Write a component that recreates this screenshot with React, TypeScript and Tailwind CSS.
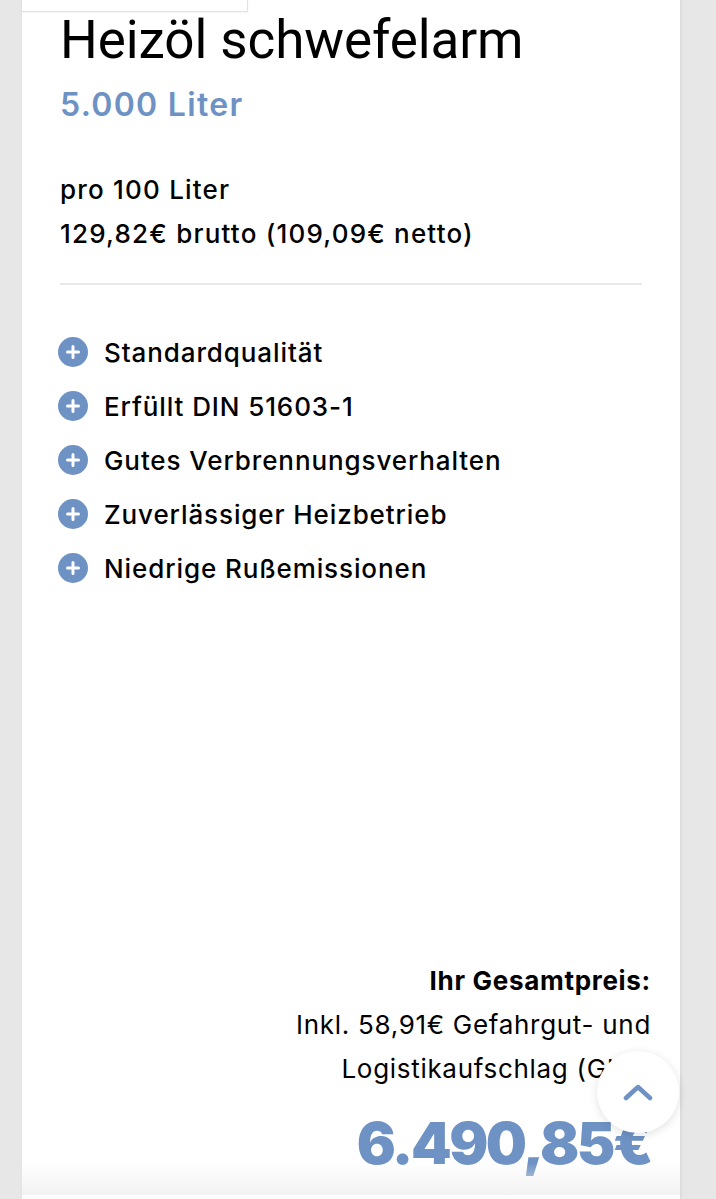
import React from "react";

const features = [
  "Standardqualität",
  "Erfüllt DIN 51603-1",
  "Gutes Verbrennungsverhalten",
  "Zuverlässiger Heizbetrieb",
  "Niedrige Rußemissionen",
];

function PlusIcon() {
  return (
    <span className="w-[30px] h-[30px] shrink-0 -ml-[2px] rounded-full bg-[#6e92c4] flex items-center justify-center">
      <svg width="14" height="14" viewBox="0 0 14 14">
        <path d="M7 1.5v11M1.5 7h11" stroke="white" strokeWidth="3" strokeLinecap="round" />
      </svg>
    </span>
  );
}

export default function App() {
  return (
    <div
      className="relative w-[716px] h-[1199px] overflow-hidden bg-[#e7e7e7]"
      style={{ fontFamily: "Inter, 'Noto Sans', sans-serif" }}
    >
      <div className="ml-[22px] w-[658px] h-full bg-white shadow-[1px_0_3px_rgba(0,0,0,0.08)] flex flex-col">
        {/* tab */}
        <div className="w-[226px] h-[12px] bg-white border-r border-b border-[#e2e2e2] shadow-[0_1px_2px_rgba(0,0,0,0.05)]" />

        <div className="px-[38px] pt-[2px]">
          <h1
            className="text-[53px] leading-[52px] font-normal text-black tracking-[-0.1px]"
            style={{ fontFamily: "Roboto, sans-serif" }}
          >
            Heizöl schwefelarm
          </h1>
          <p className="mt-[21px] text-[32px] leading-[36px] font-semibold text-[#6e92c4] tracking-[1.3px]">
            5.000 Liter
          </p>

          <div className="mt-[45px] text-[26px] leading-[44px] font-medium text-black tracking-[1.2px]">
            <p>pro 100 Liter</p>
            <p>129,82€ brutto (109,09€ netto)</p>
          </div>

          <div className="mt-[27px] h-[2px] bg-[#e8e8e8]" />

          <ul className="mt-[52px] flex flex-col gap-[24px]">
            {features.map((f) => (
              <li key={f} className="flex items-center gap-[16px] h-[30px]">
                <PlusIcon />
                <span className="text-[26px] font-medium text-black tracking-[0.9px]">{f}</span>
              </li>
            ))}
          </ul>
        </div>

        <div className="mt-auto mb-[23px] pr-[29px] flex flex-col items-end text-right text-[26px] leading-[44px] text-black tracking-[0.7px]">
          <p className="font-bold">Ihr Gesamtpreis:</p>
          <p className="font-normal">Inkl. 58,91€ Gefahrgut- und</p>
          <p className="font-normal">Logistikaufschlag (GLA)</p>
          <p className="mt-[19px] text-[58px] leading-[66px] font-black text-[#6e92c4] tracking-[-2.5px]">
            6.490,85€
          </p>
        </div>
      </div>

      {/* bottom fade */}
      <div className="absolute left-[22px] bottom-0 w-[658px] h-[36px] bg-gradient-to-b from-white/0 to-[#f0f0f0]" />
      <div className="absolute left-[22px] bottom-0 w-[658px] h-[4px] bg-white" />

      {/* scroll to top */}
      <button className="absolute left-[597px] top-[1051px] w-[82px] h-[82px] rounded-full bg-white shadow-[0_2px_10px_rgba(0,0,0,0.12)] flex items-center justify-center">
        <svg width="30" height="18" viewBox="0 0 30 18">
          <path d="M3 15L15 4l12 11" stroke="#6e92c4" strokeWidth="4.5" fill="none" strokeLinecap="round" strokeLinejoin="round" />
        </svg>
      </button>
    </div>
  );
}
